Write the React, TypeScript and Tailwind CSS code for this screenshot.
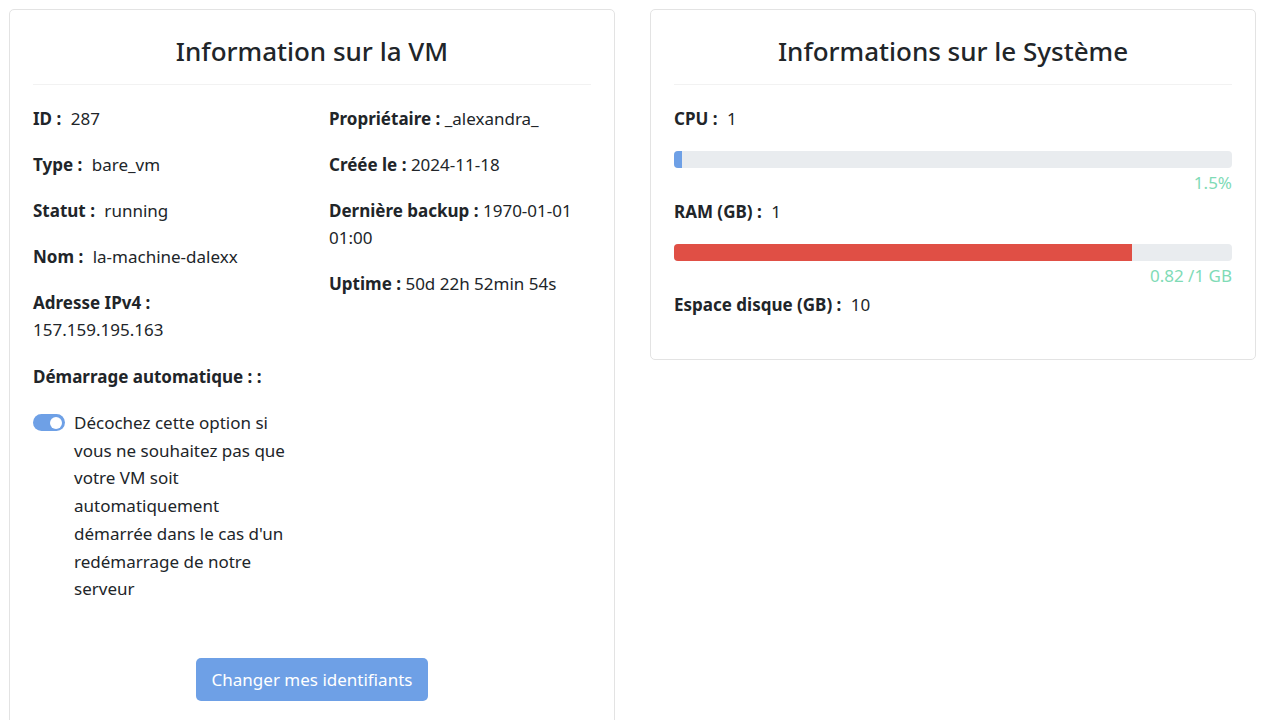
import React from "react"

const font = { fontFamily: '"Noto Sans", "Open Sans", sans-serif' }

function Field({ label, value, wide }: { label: string; value: string; wide?: boolean }) {
  return (
    <p className="mb-[19px] leading-[27px]">
      <span className="font-bold">{label}</span> <span className={wide ? "ml-[5px]" : ""}>{value}</span>
    </p>
  )
}

function Bar({ pct, color, caption }: { pct: number; color: string; caption: string }) {
  return (
    <div className="mb-[3px]">
      <div className="h-[17px] w-full overflow-hidden rounded-[4px] bg-[#e9ecef]">
        <div className={`h-full ${color}`} style={{ width: `${pct}%` }} />
      </div>
      <div className="mt-[3px] text-right leading-[24px] text-[#7fdbb6]">{caption}</div>
    </div>
  )
}

export default function App() {
  return (
    <div className="flex items-start gap-[35px] bg-white px-[9px] pt-[9px] text-[17px] text-[#212529]" style={font}>
      {/* VM card */}
      <div className="w-[606px] shrink-0 rounded-[5px] border border-[#e3e3e3] px-[23px] pb-[40px] pt-[21px]">
        <h2 className="pb-[13px] text-center text-[26px] leading-[40px] font-medium">Information sur la VM</h2>
        <hr className="border-[#f2f2f2]" />
        <div className="mt-[20px] grid grid-cols-2 gap-x-[34px]">
          <div>
            <Field label="ID :" value="287" wide />
            <Field label="Type :" value="bare_vm" wide />
            <Field label="Statut :" value="running" wide />
            <Field label="Nom :" value="la-machine-dalexx" wide />
            <p className="mb-[20px] leading-[27px]">
              <span className="font-bold">Adresse IPv4 :</span>
              <br />
              157.159.195.163
            </p>
            <p className="mb-[19px] leading-[27px] font-bold">Démarrage automatique : :</p>
            <div className="flex items-start gap-[9px]">
              <span className="mt-[5px] flex h-[17px] w-[32px] shrink-0 items-center justify-end rounded-full bg-[#6ea0e6] px-[3px]">
                <span className="h-[12px] w-[12px] rounded-full bg-white" />
              </span>
              <p className="leading-[27.7px]">
                Décochez cette option si vous ne souhaitez pas que votre VM soit automatiquement démarrée dans le cas d'un
                redémarrage de notre serveur
              </p>
            </div>
          </div>
          <div>
            <Field label="Propriétaire :" value="_alexandra_" />
            <Field label="Créée le :" value="2024-11-18" />
            <Field label="Dernière backup :" value="1970-01-01 01:00" />
            <Field label="Uptime :" value="50d 22h 52min 54s" />
          </div>
        </div>
        <div className="mt-[55px] flex justify-center">
          <button className="rounded-[5px] bg-[#6ea0e6] px-[16px] py-[8px] leading-[27px] text-white">
            Changer mes identifiants
          </button>
        </div>
      </div>

      {/* System card */}
      <div className="w-[606px] shrink-0 rounded-[5px] border border-[#e3e3e3] px-[23px] pb-[41px] pt-[21px]">
        <h2 className="pb-[13px] text-center text-[26px] leading-[40px] font-medium">Informations sur le Système</h2>
        <hr className="border-[#f2f2f2]" />
        <div className="mt-[20px]">
          <Field label="CPU :" value="1" wide />
          <Bar pct={1.5} color="bg-[#6ea0e6]" caption="1.5%" />
          <Field label="RAM (GB) :" value="1" wide />
          <Bar pct={82} color="bg-[#e04f45]" caption="0.82 /1 GB" />
          <p className="leading-[27px]">
            <span className="font-bold">Espace disque (GB) :</span> <span className="ml-[5px]">10</span>
          </p>
        </div>
      </div>
    </div>
  )
}
